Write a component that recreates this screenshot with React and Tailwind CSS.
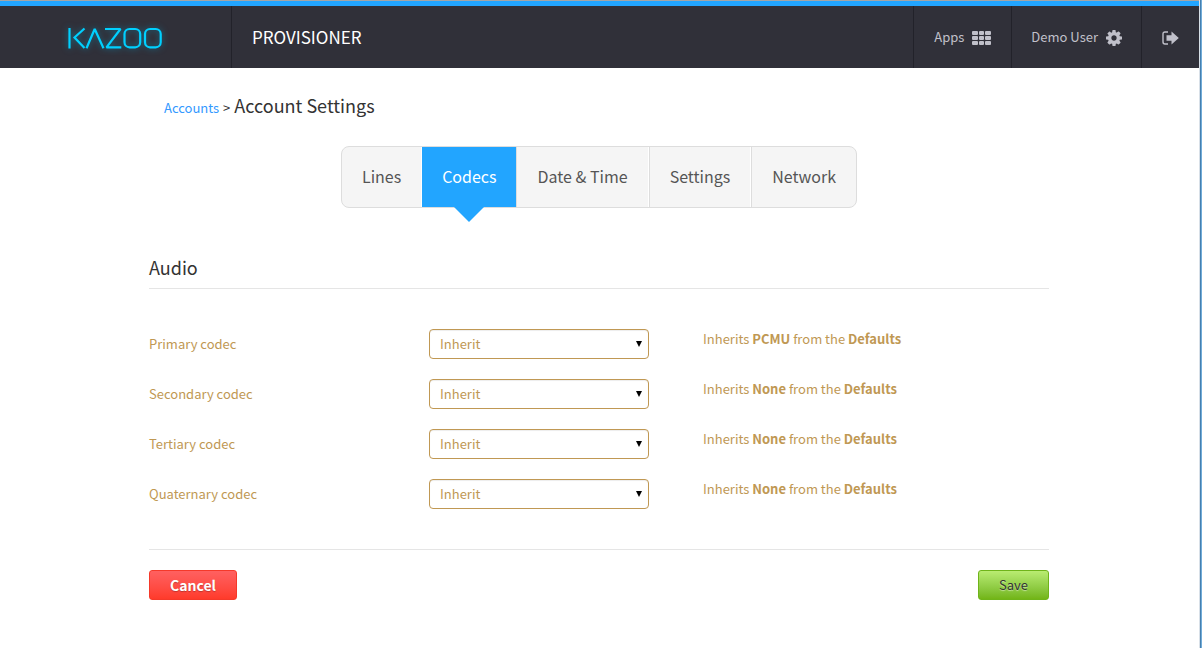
const tabs = ["Lines", "Codecs", "Date & Time", "Settings", "Network"];

const codecs = [
  { id: "primary", label: "Primary codec", inherited: "PCMU" },
  { id: "secondary", label: "Secondary codec", inherited: "None" },
  { id: "tertiary", label: "Tertiary codec", inherited: "None" },
  { id: "quaternary", label: "Quaternary codec", inherited: "None" },
];

function Logo() {
  return (
    <svg
      width="98"
      height="26"
      viewBox="0 0 98 26"
      fill="none"
      stroke="#00d0ff"
      strokeWidth="2.2"
      className="drop-shadow-[0_0_3px_#00a0d0a0]"
      role="img"
      aria-label="Kazoo"
    >
      <path d="M3.500 4v20.500M18.500 4.500L8.500 13.500L18.500 24" />
      <path d="M20.500 24.300L28.700 5L37.500 24.300M39 5H54.500L40.500 23.300H55.300" strokeLinejoin="bevel" />
      <rect x="58.500" y="5" width="15.700" height="18.300" rx="5" />
      <rect x="79" y="5" width="15.700" height="18.300" rx="5" />
    </svg>
  );
}

function AppsIcon() {
  return (
    <svg width="19" height="15" viewBox="0 0 19 15" fill="currentColor" className="mt-0.5" aria-hidden="true">
      {[0, 5, 10].map((y) =>
        [0, 7, 13].map((x) => (
          <rect key={`${x}-${y}`} x={x} y={y} width={x === 7 ? 5 : 6} height="4" rx="1" />
        ))
      )}
    </svg>
  );
}

function GearIcon() {
  return (
    <svg width="16" height="16" viewBox="128 128 1536 1536" fill="currentColor" className="mt-0.5" aria-hidden="true">
      <path d="M1152 896q0-106-75-181t-181-75-181 75-75 181 75 181 181 75 181-75 75-181zm512-109v222q0 12-8 23t-20 13l-185 28q-19 54-39 91 35 50 107 138 10 12 10 25t-9 23q-27 37-99 108t-94 71q-12 0-26-9l-138-108q-44 23-91 38-16 136-29 186-7 28-36 28h-222q-14 0-24.500-8.500t-11.500-21.500l-28-184q-49-16-90-37l-141 107q-10 9-25 9-14 0-25-11-126-114-165-168-7-10-7-23 0-12 8-23 15-21 51-66.500t54-70.500q-27-50-41-99l-183-27q-13-2-21-12.500t-8-23.500v-222q0-12 8-23t19-13l186-28q14-46 39-92-40-57-107-138-10-12-10-24 0-10 9-23 26-36 98.500-107.500t94.500-71.500q13 0 26 10l138 107q44-23 91-38 16-136 29-186 7-28 36-28h222q14 0 24.500 8.500t11.500 21.500l28 184q49 16 90 37l142-107q9-9 24-9 13 0 25 10 129 119 165 170 7 8 7 22 0 12-8 23-15 21-51 66.500t-54 70.500q26 50 41 98l183 28q13 2 21 12.500t8 23.500z" />
    </svg>
  );
}

function SignOutIcon() {
  return (
    <svg width="17" height="14" viewBox="0 0 17 14" fill="currentColor" className="mt-0.5" aria-hidden="true">
      <path d="M6 1H3Q1 1 1 3V11Q1 13 3 13H6" fill="none" stroke="currentColor" strokeWidth="1.400" />
      <path d="M4.500 4.200H9.500V.5L16.800 7L9.500 13.500V9.800H4.500Z" />
    </svg>
  );
}

function Header() {
  return (
    <header className="flex h-[68px] border-t border-[#a5a5a5] bg-[#22a5ff] pt-[5px]">
      <div className="flex grow bg-[#303039] text-[#c0c0ca]">
        <a href="#home" className="flex w-[232px] items-center border-r border-[#22222a] pl-[66px]">
          <Logo />
        </a>
        <h1 className="flex grow items-center pl-5 text-[17px] text-white">PROVISIONER</h1>
        <nav className="flex text-[13px]">
          <a href="#apps" className="flex items-center gap-2 border-l border-[#22222a] px-5">
            Apps <AppsIcon />
          </a>
          <a href="#user" className="flex items-center gap-2 border-l border-[#22222a] px-[19px]">
            Demo User <GearIcon />
          </a>
          <a href="#logout" aria-label="Sign out" className="flex items-center border-l border-[#22222a] px-5">
            <SignOutIcon />
          </a>
        </nav>
      </div>
    </header>
  );
}

function Tabs() {
  return (
    <nav className="mx-auto mt-6 flex h-[62px] w-fit rounded-lg border border-[#dddddd] bg-[#f5f5f5] text-[16px] text-[#555555]">
      {tabs.map((tab) =>
        tab === "Codecs" ? (
          <button key={tab} type="button" className="relative bg-[#22a5ff] px-5 pb-0.5 text-white">
            {tab}
            <svg
              width="30"
              height="15"
              viewBox="0 0 30 15"
              className="absolute top-full left-1/2 -translate-x-1/2"
              aria-hidden="true"
            >
              <path d="M0 0H30L15 15Z" fill="#22a5ff" />
            </svg>
          </button>
        ) : (
          <button
            key={tab}
            type="button"
            className="border-x border-r-white border-l-[#dddddd] px-5 pb-0.5 first:border-l-0 last:border-r-0"
          >
            {tab}
          </button>
        )
      )}
    </nav>
  );
}

function CodecRow({ id, label, inherited }) {
  return (
    <div className="flex h-[30px] text-[13px]">
      <label htmlFor={id} className="w-[280px] leading-[30px]">
        {label}
      </label>
      <div className="relative w-[220px]">
        <select
          id={id}
          className="h-[30px] w-full appearance-none rounded border border-[#c09853] bg-white px-[10px] text-[13px] text-[#c09853] shadow-[inset_0_1px_1px_#00000013]"
        >
          <option>Inherit</option>
        </select>
        <svg
          width="6"
          height="6"
          viewBox="0 0 6 6"
          className="pointer-events-none absolute top-3 right-[7px]"
          aria-hidden="true"
        >
          <path d="M0 0H6L3 6Z" fill="#000000" />
        </svg>
      </div>
      <p className="ml-[54px] leading-5">
        Inherits <b>{inherited}</b> from the <b>Defaults</b>
      </p>
    </div>
  );
}

export default function App() {
  return (
    <div className="min-h-screen border-r border-[#72acd8] bg-white font-['Noto_Sans_CJK_SC','Noto_Sans',sans-serif] text-[#333333]">
      <div className="min-h-screen border-r border-[#4580b0]">
        <div className="min-h-screen border-r border-[#d8e0e8]">
          <Header />
          <main className="mx-auto max-w-[901px] pt-[22px] pr-px">
            <div className="flex h-8 items-baseline gap-1 pl-[15px] text-[13px] leading-[30px]">
              <a href="#accounts" className="text-[#3399ff]">
                Accounts
              </a>
              <span>&gt;</span>
              <h2 className="text-[18px]">Account Settings</h2>
            </div>
            <Tabs />
            <form>
              <h3 className="mt-10 border-b border-[#e5e5e5] pb-0.5 text-[18px] leading-[38px]">Audio</h3>
              <div className="mt-10 flex flex-col gap-5 text-[#c09853]">
                {codecs.map((codec) => (
                  <CodecRow key={codec.id} {...codec} />
                ))}
              </div>
              <div className="mt-10 flex justify-between border-t border-[#e5e5e5] pt-5">
                <button
                  type="button"
                  className="h-[30px] rounded-[3px] border border-[#f5392a] bg-linear-to-b from-[#ff6060] to-[#ff3a2a] px-5 text-[14px] leading-7 font-bold text-white text-shadow-[0_1px_1px_#00000040]"
                >
                  Cancel
                </button>
                <button
                  type="button"
                  className="h-[30px] rounded-[3px] border border-[#6fb41a] bg-linear-to-b from-[#b9ec71] to-[#72b515] px-5 text-[13px] leading-7 text-[#333333] text-shadow-[0_1px_1px_#ffffff80]"
                >
                  Save
                </button>
              </div>
            </form>
          </main>
        </div>
      </div>
    </div>
  );
}
